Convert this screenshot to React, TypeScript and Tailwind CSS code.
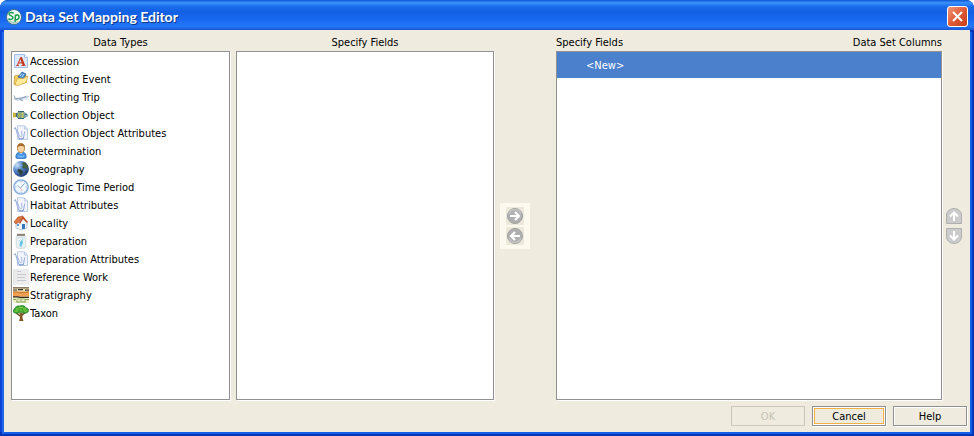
import { useState, type ReactNode } from 'react';

function Icon({ children }: { children: ReactNode }) {
  return (
    <svg viewBox="0 0 16 16" className="size-4 shrink-0" aria-hidden="true">
      {children}
    </svg>
  );
}

function LetterIcon() {
  return (
    <Icon>
      <path d="M1.500 1.500h10l3 3v10h-13z" fill="#dce8fb" stroke="#a3bce8" />
      <path d="M11.500 1.500v3h3" fill="#fff" stroke="#a3bce8" />
      <path d="M3 12.500h3M8.500 12.500h4M4.500 12 7.800 4.500M5.500 9.800h4" stroke="#d0513b" strokeWidth="1.200" fill="none" />
      <path d="M7.800 4.300 11 12.500" stroke="#c2341f" strokeWidth="2.200" />
    </Icon>
  );
}

function FolderIcon() {
  return (
    <Icon>
      <path d="M1 13.500 1.500 5l4-1 1.500 1.500 6-1 .5 7z" fill="#f3cd62" stroke="#c99b37" strokeWidth=".8" />
      <path d="m5 6 4-5 4 2-3 6z" fill="#4388cb" stroke="#245b91" strokeWidth=".7" />
      <path d="m7 5 2-2.500M9 6l2-3" stroke="#c6e5ff" />
      <path d="m2 14 2-6 4-1 1 1 6-3-2 6.500-8 3z" fill="#ffea9c" stroke="#d3a943" strokeWidth=".8" />
    </Icon>
  );
}

function PlaneIcon() {
  return (
    <Icon>
      <path d="M1 9c2 1 4 .8 6 .3L14 7l1.500.7C12 9.500 6 12.500 1.500 10.500z" fill="#c9d6e6" stroke="#a9bbd0" strokeWidth=".6" />
      <path d="m1 6.500 1.500 3" stroke="#8ba3c0" />
      <path d="M3 9.500 9 9l4-1.500M7 10.500l3 1.500" fill="none" stroke="#7f9abb" strokeWidth=".9" />
      <path d="M10 9.800h5" stroke="#dbe4ef" strokeWidth="1.500" />
    </Icon>
  );
}

function FishIcon() {
  return (
    <Icon>
      <path d="M3.500 6.500C5 4 9 3.500 12 5.500l3.500 3-3.500 2.500c-3 1.500-7 1-8.500-1z" fill="#7395a3" />
      <path d="M0 5.500 3.500 6v4L0 10.500z" fill="#c9b43e" />
      <path d="M3.500 6v4" stroke="#3e6470" strokeWidth="1.200" />
      <path d="M5 5.500h2.500v5H5z" fill="#9db65c" />
      <path d="M8.500 5.300h2v5.700h-2z" fill="#c3c864" />
      <path d="M5 4.500h6M5 11.500h6" stroke="#365f78" />
      <path d="M12 6.500h2l1 2-1 1h-2z" fill="#8cbbd6" />
      <circle cx="13" cy="7.500" r=".7" fill="#243d45" />
    </Icon>
  );
}

function AttributesIcon() {
  return (
    <Icon>
      <path d="M4.500.8h7l3 3v10.700h-10z" fill="#f1f4fd" stroke="#bccae4" />
      <path d="M11.500 1v3h3" fill="#dde6f7" stroke="#bccae4" />
      <path d="M.800 3.500 2.500 3l3 9.500c.8 1.800 3 2 5 .5l1.200-6.500" fill="none" stroke="#9bb1dc" strokeWidth="1.100" />
      <path d="M4 4.500 6.500 11c.7 1.300 2.200.8 2.500-.3L8.500 6" fill="none" stroke="#a9bce1" />
      <path d="M6 13.500c2 1 3.500.5 5-.8" fill="none" stroke="#7c98cf" />
    </Icon>
  );
}

function PersonIcon() {
  return (
    <Icon>
      <path d="M3 15c-.5-3.500 1-5.500 3-5.500h4c2.500 0 3.500 2 3 5.500-2 1-8 1-10 0z" fill="#4b98e8" stroke="#2b6ab4" strokeWidth=".8" />
      <path d="m6 9 2 2 2-2" fill="#fff" />
      <path d="M4.500 4c0-2 1.500-3.500 3.500-3.500S11.500 2 11.500 4v2c0 2-1.500 3.500-3.500 3.500S4.500 8 4.500 6z" fill="#f8d3a2" stroke="#b57a3c" strokeWidth=".8" />
      <path d="M4.500 4.500C4 1.500 6 .5 8 .5s4 1 3.500 4c-1-1.700-5-2-7 0z" fill="#a8692f" />
      <path d="M5 13c2 1 4 1 6 0" stroke="#91c9fa" fill="none" />
    </Icon>
  );
}

function GlobeIcon() {
  return (
    <Icon>
      <defs>
        <radialGradient id="globe-sea" cx=".25" cy=".25" r=".85">
          <stop stopColor="#cfe3f8" />
          <stop offset=".4" stopColor="#5b8bcb" />
          <stop offset="1" stopColor="#1c3472" />
        </radialGradient>
      </defs>
      <circle cx="8" cy="8" r="7.900" fill="url(#globe-sea)" />
      <path d="m9 2 3-1 3 4-.5 3-2.500-1-1 1-2-1.500 1-2z" fill="#44603f" />
      <path d="m5 8 3 .5 2 2-1 3-1.500 1-1.500-3-1.500-1.500z" fill="#2e4638" />
      <path d="m12 11 2-1.500-1 3z" fill="#2e4638" />
    </Icon>
  );
}

function ClockIcon() {
  return (
    <Icon>
      <circle cx="8" cy="8" r="7.100" fill="#f4f9fe" stroke="#83aede" strokeWidth="1.500" />
      <circle cx="8" cy="8" r="5.800" fill="none" stroke="#d3e4f6" />
      <path d="M8 2.500v1M8 12.500v1M2.500 8h1M12.500 8h1" stroke="#8caed4" />
      <path d="m4.500 6.500 3 2.500 4-4.500" fill="none" stroke="#84abd6" />
      <path d="m7.500 9 2 3" stroke="#eba78c" strokeWidth=".8" />
    </Icon>
  );
}

function HouseIcon() {
  return (
    <Icon>
      <path d="M3 7v6l5 2 6-2V7l-4-4z" fill="#f0f5fc" stroke="#a4b4c6" strokeWidth=".7" />
      <path d="m1 7 4-5 5-1-4 6-3 2z" fill="#de7843" stroke="#b04e26" strokeWidth=".6" />
      <path d="m6 8 4-7 5 6-1 1-4-4-3 5z" fill="#bd4f2b" />
      <path d="M9 9h3v5H9z" fill="#3677b9" />
      <path d="M4 9h2v2H4z" fill="#5c9bd3" />
    </Icon>
  );
}

function JarIcon() {
  return (
    <Icon>
      <path d="M4 2.500h8l.8 2V14c-1 2-8.600 2-9.600 0V4.500z" fill="#e8f1f3" stroke="#cbd6d6" strokeWidth=".8" />
      <path d="M4 .8h8v2.200H4z" fill="#8d8780" />
      <path d="M4 4.500h8" stroke="#d4dfdf" />
      <path d="m10 5-.5 3 .5 2-2 4-1.500-1L7 9l1-1z" fill="#6ac4ea" />
      <path d="m6 7 2 2M7 13l2 1" stroke="#96d9f0" />
    </Icon>
  );
}

function DocumentIcon() {
  return (
    <Icon>
      <path d="M0 0h16v16H0z" fill="#ececee" />
      <path d="M4 2.500h4M4 5.500h9M4 8.500h8M4 11.500h9" stroke="#c6c7ca" />
      <path d="M1 1v14" stroke="#e0e0e2" />
    </Icon>
  );
}

function StrataIcon() {
  return (
    <Icon>
      <path d="M0 0h16v16H0z" fill="#e8dfb9" />
      <path d="M0 .8h16" stroke="#8a7860" strokeWidth="1.500" />
      <path d="M0 3h4M5 2.700h5M12 3.200h4" stroke="#3d372f" strokeWidth="1.200" />
      <path d="M0 4.500h16v5H0z" fill="#f0a050" />
      <path d="M0 5h4l2 .6h4l6-.6" fill="none" stroke="#c27a38" />
      <path d="M0 9.800h5l2 .5h9" fill="none" stroke="#34291c" strokeWidth="1.200" />
      <path d="M0 11h16v5H0z" fill="#eef0c6" />
      <path d="M0 12.500h3M12 12.500h4M3 15h10" stroke="#86a35a" />
      <path d="M4 12v3M8 12v3M12 12v3M4 12h8" stroke="#8da867" strokeWidth=".8" />
    </Icon>
  );
}

function TreeIcon() {
  return (
    <Icon>
      <path d="m7 11-4-3M8 11l5-4" stroke="#6a411b" strokeWidth="1.300" />
      <path d="M6.500 8h3L9.500 13l1 3H6l1-3z" fill="#875726" />
      <path d="M2 8C-1 7.500 0 4 2 3.500 2 1.500 5 .5 6.500 1 9 0 12 .5 12.500 2.500 15.500 3 16.500 5.500 15 7c-1 1.300-3 1.300-5 1L8 7.200 6 8c-1.500.5-3 .5-4 0z" fill="#43a831" stroke="#227220" strokeWidth=".6" />
      <path d="M3 4h3M6 2.500h4M10 4h3M7 5h2M2 6h3M11 6h3" stroke="#86d14a" />
    </Icon>
  );
}

const dataTypes = [
  { name: 'Accession', Glyph: LetterIcon },
  { name: 'Collecting Event', Glyph: FolderIcon },
  { name: 'Collecting Trip', Glyph: PlaneIcon },
  { name: 'Collection Object', Glyph: FishIcon },
  { name: 'Collection Object Attributes', Glyph: AttributesIcon },
  { name: 'Determination', Glyph: PersonIcon },
  { name: 'Geography', Glyph: GlobeIcon },
  { name: 'Geologic Time Period', Glyph: ClockIcon },
  { name: 'Habitat Attributes', Glyph: AttributesIcon },
  { name: 'Locality', Glyph: HouseIcon },
  { name: 'Preparation', Glyph: JarIcon },
  { name: 'Preparation Attributes', Glyph: AttributesIcon },
  { name: 'Reference Work', Glyph: DocumentIcon },
  { name: 'Stratigraphy', Glyph: StrataIcon },
  { name: 'Taxon', Glyph: TreeIcon },
];

const listClass =
  'min-h-0 flex-1 overflow-hidden border border-[#919191] bg-white shadow-[1px_1px_0_#ffffff]';

const headingClass = 'pt-[5px] text-center leading-4';

const buttonClass = 'h-5 w-[74px] border pt-px text-center leading-4';

function ArrowGlyph({ turn }: { turn: string }) {
  return (
    <svg viewBox="0 0 18 18" className={`size-[18px] ${turn}`} aria-hidden="true">
      <circle cx="9" cy="9" r="7.500" fill="#b0b0b0" stroke="#a0a0a0" />
      <path d="M3 7a6.300 6.300 0 0 1 12 0" fill="none" stroke="#c4c4c4" strokeWidth="1.500" />
      <path d="M4 9h9M9 5l4 4-4 4" fill="none" stroke="#fff" strokeWidth="2.200" />
    </svg>
  );
}

function OrderGlyph({ turn }: { turn: string }) {
  return (
    <svg viewBox="0 0 16 16" className={`size-4 ${turn}`} aria-hidden="true">
      <path d="M.500 15.500V7a7.500 6.500 0 0 1 15 0v8.500z" fill="#cbcbcb" stroke="#b0b0b0" />
      <path d="M8 13V5M4 8.500l4-4 4 4" fill="none" stroke="#fff" strokeWidth="2" />
    </svg>
  );
}

export default function App() {
  const [selected, setSelected] = useState('');

  return (
    <main className="flex min-h-screen flex-col overflow-hidden rounded-t-lg bg-[#0435b5] font-['DejaVu_Sans_Condensed','Liberation_Sans',sans-serif] text-[11px] text-black">
      <header className="flex h-[30px] shrink-0 items-center bg-[linear-gradient(to_bottom,#0a55d4_0%,#3b92fb_9%,#1a6ced_22%,#1260e2_40%,#1969f0_65%,#2376f8_88%,#1a55d0_100%)] px-[6px] pt-[3px]">
        <svg viewBox="0 0 16 16" className="size-4 shrink-0" aria-hidden="true">
          <circle cx="8" cy="8" r="7.500" fill="#eef8f2" stroke="#3f6f8f" />
          <path d="M2 11a7 7 0 0 0 12 1l-5 1z" fill="#b3d3c4" />
          <path d="M7.500 4.500C6.500 3 3 3.300 3 5s4 1.500 4 3.500-3.500 2.700-4.500 1M9.500 5.500 9 13M9.300 7c1-1.700 4-1.200 3.700 1.300s-3 3-4 1.500" fill="none" stroke="#159a4c" strokeWidth="1.500" />
        </svg>
        <h1 className="ml-[3px] flex-1 font-['Lato','Open_Sans',sans-serif] text-[14px] leading-[18px] font-bold text-white [text-shadow:1px_1px_0_#0b3486]">
          Data Set Mapping Editor
        </h1>
        <button aria-label="Close" className="flex size-[21px] items-center justify-center rounded-[3px] border border-white bg-linear-to-br from-[#ef9878] via-[#df5937] to-[#c63d17]">
          <svg viewBox="0 0 13 13" className="size-[13px]" aria-hidden="true">
            <path d="m2 2 9 9m0-9-9 9" stroke="#fff" strokeWidth="2" />
          </svg>
        </button>
      </header>

      <div className="mx-1 mb-1 flex flex-1 flex-col bg-[#efecdf] shadow-[0_2px_0_#1260ea,2px_2px_0_#1260ea,-2px_2px_0_#1f66e8,-4px_0_0_#0a45d8]">
        <div className="flex flex-1 pr-2 pl-[7px]">
          <section className="flex min-w-0 flex-[219_1_0] flex-col">
            <h2 id="types-label" className={headingClass}>Data Types</h2>
            <ul role="listbox" aria-labelledby="types-label" className={listClass}>
              {dataTypes.map(({ name, Glyph }) => (
                <li
                  key={name}
                  role="option"
                  aria-selected={selected === name}
                  onClick={() => setSelected(name)}
                  className="flex h-[18px] items-center gap-px pl-px whitespace-nowrap aria-selected:bg-[#4a80cc] aria-selected:text-white"
                >
                  <Glyph />
                  <span className="pt-[2px] leading-4">{name}</span>
                </li>
              ))}
            </ul>
          </section>

          <section className="ml-[6px] flex min-w-0 flex-[258_1_0] flex-col">
            <h2 id="fields-label" className={headingClass}>Specify Fields</h2>
            <ul role="listbox" aria-labelledby="fields-label" className={listClass} />
          </section>

          <div className="mr-[26px] ml-[6px] flex w-[30px] shrink-0 flex-col justify-center pt-[21px]">
            <div className="flex h-[46px] flex-col items-center justify-center gap-[2px] bg-[#fcf9ee]">
              <button aria-label="Map field" className="size-[18px] bg-[#ece9dc]">
                <ArrowGlyph turn="rotate-0" />
              </button>
              <button aria-label="Unmap field" className="size-[18px] bg-[#ece9dc]">
                <ArrowGlyph turn="rotate-180" />
              </button>
            </div>
          </div>

          <section className="flex min-w-0 flex-[386_1_0] flex-col">
            <div className="flex justify-between">
              <h2 id="mapping-label" className={headingClass}>Specify Fields</h2>
              <h2 className={headingClass}>Data Set Columns</h2>
            </div>
            <ul role="listbox" aria-labelledby="mapping-label" className={listClass}>
              <li role="option" aria-selected="true" className="h-[26px] bg-[#4a80cc] pt-[2px] pl-[29px] leading-6 text-white">
                &lt;New&gt;
              </li>
            </ul>
          </section>

          <div className="ml-1 flex w-4 shrink-0 flex-col justify-center gap-1 pt-[21px]">
            <button aria-label="Move up" className="size-4">
              <OrderGlyph turn="rotate-0" />
            </button>
            <button aria-label="Move down" className="size-4">
              <OrderGlyph turn="rotate-180" />
            </button>
          </div>
        </div>

        <footer className="flex justify-end gap-[7px] pt-[6px] pr-[3px] pb-[6px]">
          <button disabled className={`${buttonClass} border-[#cac7bb] text-[#c5c2b6]`}>OK</button>
          <button className={`${buttonClass} border-[#8f8f8f] shadow-[1px_1px_0_#ffffff,inset_0_0_0_1px_#ffffff,inset_0_0_0_2px_#f5b13d]`}>Cancel</button>
          <button className={`${buttonClass} border-[#8f8f8f] shadow-[1px_1px_0_#ffffff,inset_1px_1px_0_#ffffff]`}>Help</button>
        </footer>
      </div>
    </main>
  );
}
